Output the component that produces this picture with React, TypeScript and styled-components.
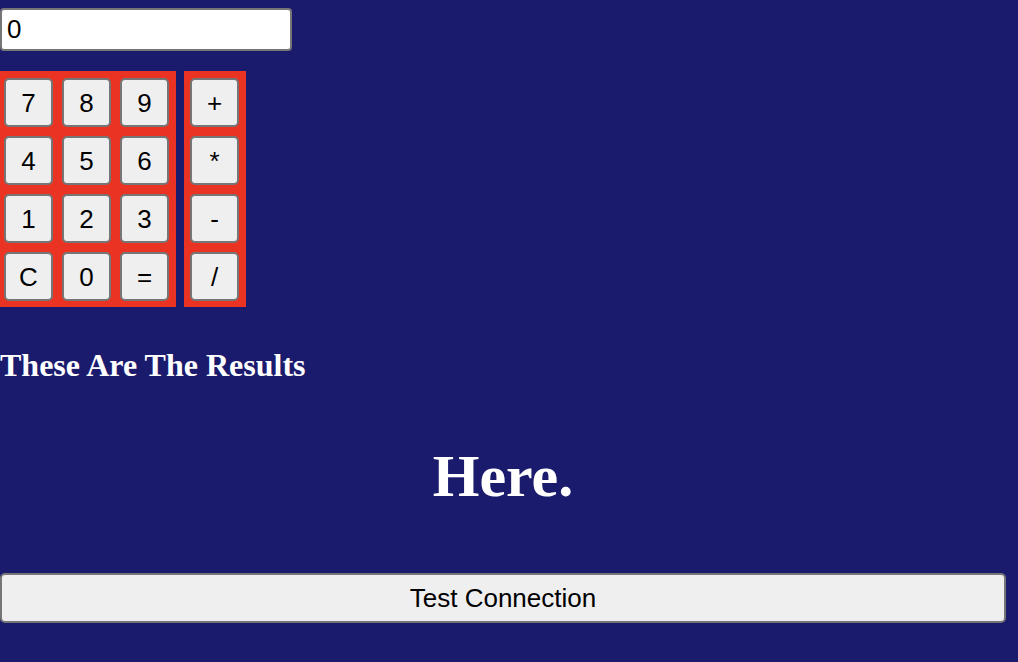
import React, { useState } from 'react';
import styled, { createGlobalStyle } from 'styled-components';

const GlobalStyle = createGlobalStyle`
  html, body {
    margin: 0;
    padding: 0;
    background: #1b1b6e;
    overflow: hidden;
  }
`;

const digitRows = ['7', '8', '9', '4', '5', '6', '1', '2', '3', 'C', '0', '='];
const operators = ['+', '*', '-', '/'];

const App = () => {
  const [display, setDisplay] = useState('0');

  return (
    <>
      <GlobalStyle />
      <Page>
        <Display value={display} onChange={(e) => setDisplay(e.target.value)} />
        <KeypadRow>
          <Panel $cols={3} $padLeft={4}>
            {digitRows.map((k) => (
              <Key key={k}>{k}</Key>
            ))}
          </Panel>
          <Panel $cols={1} $padLeft={6}>
            {operators.map((k) => (
              <Key key={k}>{k}</Key>
            ))}
          </Panel>
        </KeypadRow>
        <ResultsTitle>These Are The Results</ResultsTitle>
        <ResultValue>Here.</ResultValue>
        <WideButton>Test Connection</WideButton>
      </Page>
    </>
  );
};

export default App;

const Page = styled.div`
  width: 1006px;
  padding-top: 8px;
  display: flex;
  flex-direction: column;
  align-items: flex-start;
  font-family: "Liberation Sans", Arial, sans-serif;
`;

const Display = styled.input`
  box-sizing: border-box;
  width: 292px;
  height: 43px;
  margin: 0;
  padding: 0 5px;
  border: 2px solid #767676;
  border-radius: 4px;
  background: #fff;
  color: #000;
  font-family: "Liberation Sans", Arial, sans-serif;
  font-size: 26px;
  outline: none;
`;

const KeypadRow = styled.div`
  display: flex;
  align-items: flex-start;
  gap: 8px;
  margin-top: 20px;
`;

const Panel = styled.div<{ $cols: number; $padLeft: number }>`
  display: grid;
  grid-template-columns: repeat(${({ $cols }) => $cols}, 49px);
  gap: 9px;
  padding: 7px 7px 6px ${({ $padLeft }) => $padLeft}px;
  background: #ea3323;
`;

const Key = styled.button`
  box-sizing: border-box;
  width: 49px;
  height: 49px;
  padding: 0;
  border: 2px solid #767676;
  border-radius: 5px;
  background: #efefef;
  color: #000;
  font-family: "Liberation Sans", Arial, sans-serif;
  font-size: 26px;
  line-height: 1;
  cursor: pointer;
`;

const ResultsTitle = styled.h2`
  margin: 40px 0 0;
  font-family: "Liberation Serif", "Times New Roman", serif;
  font-weight: bold;
  font-size: 32px;
  line-height: 36px;
  color: #fff;
`;

const ResultValue = styled.h1`
  align-self: stretch;
  margin: 59px 0 0;
  text-align: center;
  font-family: "Liberation Serif", "Times New Roman", serif;
  font-weight: bold;
  font-size: 60px;
  line-height: 69px;
  color: #fff;
`;

const WideButton = styled.button`
  box-sizing: border-box;
  width: 1006px;
  height: 50px;
  margin-top: 62px;
  padding: 0;
  border: 2px solid #767676;
  border-radius: 5px;
  background: #efefef;
  color: #000;
  font-family: "Liberation Sans", Arial, sans-serif;
  font-size: 26px;
  cursor: pointer;
`;
